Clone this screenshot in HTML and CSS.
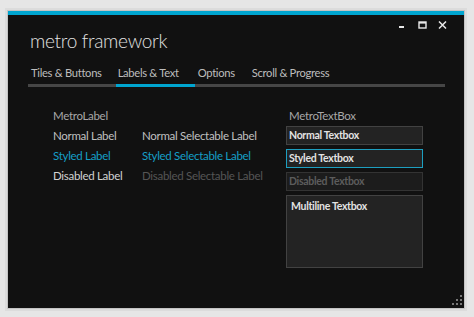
FILE: index.html
```html
<!DOCTYPE html>
<html>
<head>
<meta charset="utf-8">
<link rel="stylesheet" href="styles.css">
</head>
<body>
<div class="window">
  <div class="header">
    <div class="title">metro framework</div>
    <div class="controls">
      <span class="ctl"><svg width="8" height="8" viewBox="0 0 8 8"><rect x="1" y="5" width="5" height="2" fill="#e8e8e8"/></svg></span>
      <span class="ctl"><svg width="9" height="8" viewBox="0 0 9 8"><rect x="1" y="1" width="7" height="6" fill="none" stroke="#e8e8e8" stroke-width="1.4"/><rect x="1" y="1" width="7" height="1.6" fill="#e8e8e8"/></svg></span>
      <span class="ctl"><svg width="9" height="8" viewBox="0 0 9 8"><path d="M1 0.5 L8 7.5 M8 0.5 L1 7.5" stroke="#e8e8e8" stroke-width="1.5"/></svg></span>
    </div>
  </div>
  <div class="tabs">
    <div class="tab">Tiles &amp; Buttons</div>
    <div class="tab active">Labels &amp; Text</div>
    <div class="tab">Options</div>
    <div class="tab">Scroll &amp; Progress</div>
  </div>
  <div class="content">
    <div class="labels">
      <div class="lbl head">MetroLabel</div>
      <div></div>
      <div class="lbl normal">Normal Label</div>
      <div class="lbl normal">Normal Selectable Label</div>
      <div class="lbl styled">Styled Label</div>
      <div class="lbl styled">Styled Selectable Label</div>
      <div class="lbl disabled">Disabled Label</div>
      <div class="lbl disabled-sel">Disabled Selectable Label</div>
    </div>
    <div class="boxes">
      <div class="lbl head boxhead">MetroTextBox</div>
      <div class="tb">Normal Textbox</div>
      <div class="tb styled-tb">Styled Textbox</div>
      <div class="tb disabled-tb">Disabled Textbox</div>
      <div class="tb multi">Multiline Textbox</div>
    </div>
  </div>
  <svg class="grip" width="10" height="10" viewBox="0 0 10 10">
    <rect x="8" y="0" width="2" height="2" fill="#777"/>
    <rect x="4" y="4" width="2" height="2" fill="#777"/>
    <rect x="8" y="4" width="2" height="2" fill="#777"/>
    <rect x="0" y="8" width="2" height="2" fill="#777"/>
    <rect x="4" y="8" width="2" height="2" fill="#777"/>
    <rect x="8" y="8" width="2" height="2" fill="#777"/>
  </svg>
</div>
</body>
</html>
```
FILE: styles.css
```css
html, body {
  margin: 0;
  padding: 0;
  background: #e6e6e6;
}
body {
  font-family: "Lato", "Open Sans", sans-serif;
  width: 474px;
  height: 317px;
  overflow: hidden;
}
.window {
  position: relative;
  box-sizing: border-box;
  margin: 11px 0 0 8px;
  width: 456px;
  height: 297px;
  background: #111111;
  border-top: 4px solid #00a5d0;
  box-shadow: 0 0 0 1px #c4c4c4, 0 0 0 3px #dcdcdc;
  display: flex;
  flex-direction: column;
}
.header {
  display: flex;
  justify-content: space-between;
  align-items: flex-start;
  padding: 0 12px 0 22px;
}
.title {
  margin-top: 13px;
  font-size: 19px;
  letter-spacing: -0.3px;
  line-height: 26px;
  color: #e2e2e2;
  font-weight: 300;
}
.controls {
  display: flex;
  margin-top: 4px;
}
.ctl {
  width: 20px;
  height: 12px;
  display: flex;
  align-items: center;
  justify-content: center;
}
.tabs {
  display: flex;
  margin: 10px 0 0 20px;
  width: 417px;
  border-bottom: 3px solid #464646;
}
.tab {
  font-size: 11.2px;
  letter-spacing: -0.3px;
  line-height: 18px;
  color: #bdbdbd;
  padding: 0 14px 2px 3px;
}
.tab.active {
  padding-left: 2px;
  padding-right: 16px;
  margin-bottom: -3px;
  border-bottom: 3px solid #00a5d0;
}
.content {
  display: flex;
  margin-top: 19px;
  padding-left: 45px;
}
.labels {
  display: grid;
  grid-template-columns: 89px 144px;
  grid-auto-rows: 20px;
}
.lbl {
  font-size: 11.5px;
  letter-spacing: -0.3px;
  line-height: 20px;
  white-space: nowrap;
}
.head { color: #a8a8a8; }
.normal { color: #c0c0c0; }
.styled { color: #159fc6; }
.disabled { color: #d2d2d2; }
.disabled-sel { color: #555555; }
.boxes {
  width: 137px;
  display: flex;
  flex-direction: column;
  gap: 4px;
}
.boxhead {
  padding-left: 3px;
  margin-bottom: -4px;
}
.tb {
  box-sizing: border-box;
  height: 19px;
  background: #232323;
  border: 1px solid #424242;
  font-size: 10.5px;
  letter-spacing: -0.3px;
  font-weight: 700;
  line-height: 17px;
  padding-left: 2px;
  color: #e2e2e2;
  white-space: nowrap;
}
.styled-tb {
  border-color: #1d9fc0;
}
.disabled-tb {
  color: #5c5c5c;
  background: #1c1c1c;
  border-color: #333;
}
.multi {
  height: 73px;
  padding: 2px 4px;
}
.grip {
  position: absolute;
  right: 2px;
  bottom: 3px;
}
```
